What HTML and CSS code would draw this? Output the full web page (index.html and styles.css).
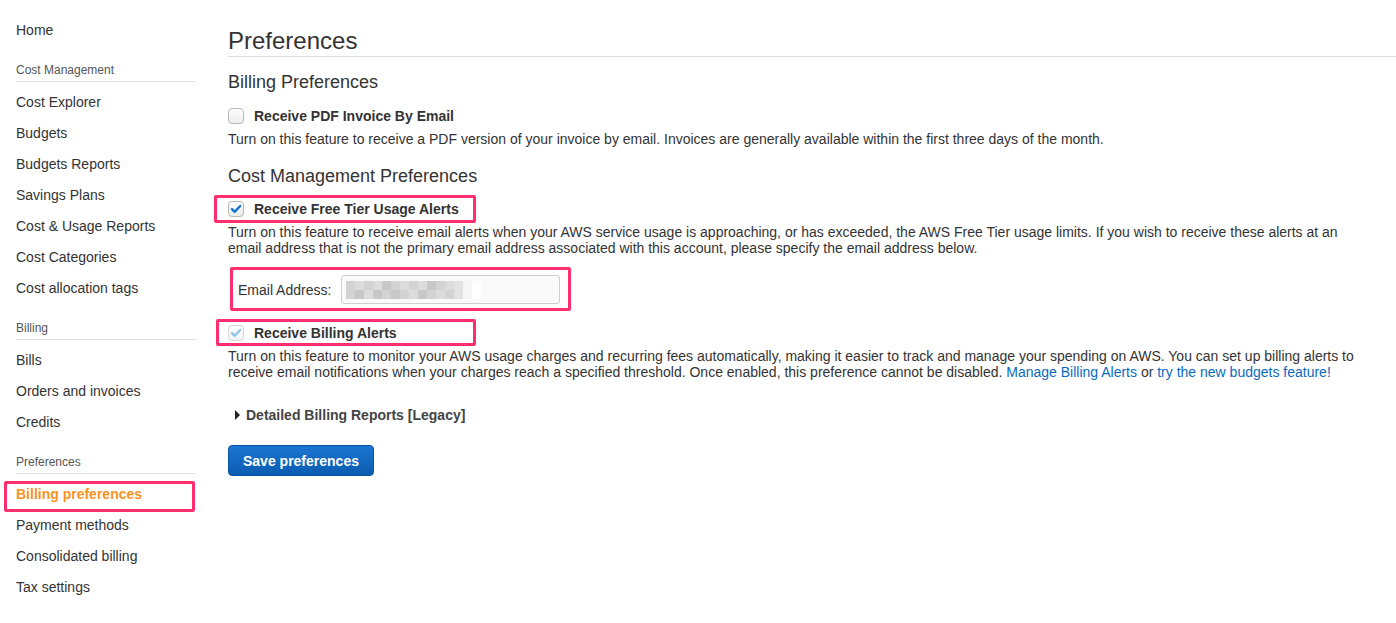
FILE: index.html
```html
<!DOCTYPE html>
<html lang="en">
<head>
<meta charset="utf-8">
<title>Billing preferences</title>
<link rel="stylesheet" href="styles.css">
</head>
<body>
<div class="page">
  <nav class="sidebar">
    <a class="nav-item" href="#">Home</a>
    <div class="nav-label">Cost Management</div>
    <a class="nav-item" href="#">Cost Explorer</a>
    <a class="nav-item" href="#">Budgets</a>
    <a class="nav-item" href="#">Budgets Reports</a>
    <a class="nav-item" href="#">Savings Plans</a>
    <a class="nav-item" href="#">Cost &amp; Usage Reports</a>
    <a class="nav-item" href="#">Cost Categories</a>
    <a class="nav-item" href="#">Cost allocation tags</a>
    <div class="nav-label">Billing</div>
    <a class="nav-item" href="#">Bills</a>
    <a class="nav-item" href="#">Orders and invoices</a>
    <a class="nav-item" href="#">Credits</a>
    <div class="nav-label">Preferences</div>
    <a class="nav-item active highlight-nav" href="#">Billing preferences</a>
    <a class="nav-item" href="#">Payment methods</a>
    <a class="nav-item" href="#">Consolidated billing</a>
    <a class="nav-item" href="#">Tax settings</a>
  </nav>

  <main class="main">
    <h1 class="page-title">Preferences</h1>
    <div class="content">
      <h2 class="section-title first">Billing Preferences</h2>
      <label class="check-row">
        <span class="checkbox"></span>
        <span class="check-label">Receive PDF Invoice By Email</span>
      </label>
      <p class="desc">Turn on this feature to receive a PDF version of your invoice by email. Invoices are generally available within the first three days of the month.</p>

      <h2 class="section-title">Cost Management Preferences</h2>
      <label class="check-row row-tier highlight-a">
        <span class="checkbox checked">
          <svg viewBox="0 0 16 16" width="16" height="16"><path d="M4 8.2l2.6 2.6L12.2 5" fill="none" stroke="#0b75d1" stroke-width="2.4" stroke-linecap="round" stroke-linejoin="round"/></svg>
        </span>
        <span class="check-label">Receive Free Tier Usage Alerts</span>
      </label>
      <p class="desc">Turn on this feature to receive email alerts when your AWS service usage is approaching, or has exceeded, the AWS Free Tier usage limits. If you wish to receive these alerts at an email address that is not the primary email address associated with this account, please specify the email address below.</p>

      <div class="email-row highlight-b">
        <span class="email-label">Email Address:</span>
        <div class="email-input">
          <div class="blur">
            <span class="px p2"></span><span class="px p1"></span><span class="px p2"></span><span class="px p1"></span><span class="px p3"></span><span class="px p2"></span><span class="px p1"></span><span class="px p2"></span><span class="px p1"></span><span class="px p3"></span><span class="px p2"></span><span class="px p1"></span><span class="px p4"></span><span class="px p5"></span><span class="px p6"></span>
            <span class="px p2"></span><span class="px p3"></span><span class="px p1"></span><span class="px p3"></span><span class="px p2"></span><span class="px p3"></span><span class="px p2"></span><span class="px p1"></span><span class="px p3"></span><span class="px p2"></span><span class="px p1"></span><span class="px p2"></span><span class="px p4"></span><span class="px p5"></span><span class="px p6"></span>
          </div>
        </div>
      </div>

      <label class="check-row row-billing highlight-c">
        <span class="checkbox checked disabled">
          <svg viewBox="0 0 16 16" width="16" height="16"><path d="M4 8.2l2.6 2.6L12.2 5" fill="none" stroke="#8ec6ea" stroke-width="2.4" stroke-linecap="round" stroke-linejoin="round"/></svg>
        </span>
        <span class="check-label">Receive Billing Alerts</span>
      </label>
      <p class="desc">Turn on this feature to monitor your AWS usage charges and recurring fees automatically, making it easier to track and manage your spending on AWS. You can set up billing alerts to receive email notifications when your charges reach a specified threshold. Once enabled, this preference cannot be disabled. <a href="#">Manage Billing Alerts</a> or <a href="#">try the new budgets feature!</a></p>

      <div class="expander">
        <span class="caret"></span>
        <span class="expander-label">Detailed Billing Reports [Legacy]</span>
      </div>

      <button class="btn-primary" type="button">Save preferences</button>
    </div>
  </main>
</div>
</body>
</html>
```

FILE: styles.css
```css
* { box-sizing: border-box; }

html, body {
  margin: 0;
  padding: 0;
  background: #fff;
}

body {
  font-family: "Liberation Sans", Arial, Helvetica, sans-serif;
  color: #333;
  font-size: 14px;
}

.page {
  display: flex;
  align-items: flex-start;
  gap: 32px;
}

/* Sidebar */
.sidebar {
  width: 196px;
  flex: 0 0 196px;
  padding: 15px 0 0 16px;
  display: flex;
  flex-direction: column;
}

.nav-item {
  display: block;
  height: 31px;
  line-height: 31px;
  font-size: 14px;
  color: #333;
  text-decoration: none;
  white-space: nowrap;
}

.nav-item.active {
  color: #f7931e;
  font-weight: bold;
}

.nav-label {
  margin-top: 16px;
  margin-bottom: 5px;
  line-height: 16px;
  padding-bottom: 3px;
  font-size: 12px;
  color: #555;
  border-bottom: 1px solid #e2e2e2;
}

.highlight-nav {
  position: relative;
}

.highlight-nav::after {
  content: "";
  position: absolute;
  left: -12px;
  right: 1px;
  top: 2px;
  bottom: -2px;
  border: 3px solid #ff2e6e;
  border-radius: 2px;
  pointer-events: none;
}

/* Main */
.main {
  flex: 1;
  min-width: 0;
  padding-top: 27px;
}

.page-title {
  margin: 0;
  font-size: 24px;
  font-weight: normal;
  line-height: 28px;
  padding-bottom: 1px;
  color: #333;
  border-bottom: 1px solid #dcdcdc;
}

.content {
  padding-right: 30px;
  display: flex;
  flex-direction: column;
  align-items: flex-start;
}

.section-title {
  margin: 18px 0 0;
  font-size: 18px;
  font-weight: normal;
  line-height: 22px;
  color: #333;
}

.section-title.first {
  margin-top: 14px;
}

.check-row {
  display: inline-flex;
  align-items: center;
  gap: 10px;
  height: 20px;
  margin-top: 13px;
  cursor: pointer;
}

.row-tier { margin-top: 12px; }
.row-billing { margin-top: 19px; }

.highlight-a,
.highlight-c {
  position: relative;
}

.highlight-a::after,
.highlight-c::after {
  content: "";
  position: absolute;
  left: -14px;
  right: -17px;
  top: -4px;
  bottom: -4px;
  border: 3px solid #ff2e6e;
  border-radius: 2px;
  pointer-events: none;
}

.highlight-c::after {
  left: -12px;
  right: -79px;
  bottom: -3px;
}

.checkbox {
  width: 16px;
  height: 16px;
  border: 1px solid #b8b8b8;
  border-radius: 4px;
  background: linear-gradient(#fdfdfd, #ececec);
  display: inline-flex;
  align-items: center;
  justify-content: center;
  flex: 0 0 16px;
}

.checkbox svg {
  display: block;
  margin: -1px;
}

.checkbox.disabled {
  border-color: #d6d6d6;
  background: linear-gradient(#fdfdfd, #f4f4f4);
}

.check-label {
  font-weight: bold;
  font-size: 14px;
  color: #333;
}

.desc {
  margin: 5px 0 0;
  font-size: 14px;
  line-height: 16px;
  color: #333;
}

.desc a {
  color: #0a6ac0;
  text-decoration: none;
}

/* Email */
.email-row {
  display: inline-flex;
  align-items: center;
  gap: 10px;
  margin-top: 19px;
  padding-left: 10px;
}

.highlight-b {
  position: relative;
}

.highlight-b::after {
  content: "";
  position: absolute;
  left: 2px;
  right: -11px;
  top: -8px;
  bottom: -7px;
  border: 3px solid #ff2e6e;
  border-radius: 2px;
  pointer-events: none;
}

.email-label {
  font-size: 14px;
  color: #333;
}

.email-input {
  width: 219px;
  height: 29px;
  border: 1px solid #cfcfcf;
  border-radius: 3px;
  background: #fafafa;
  padding: 5px 0 0 4px;
}

.blur {
  display: grid;
  grid-template-columns: repeat(15, 9px);
  grid-auto-rows: 9px;
}

.px { display: block; }
.p1 { background: #dcdcdc; }
.p2 { background: #d3d3d3; }
.p3 { background: #c8c8c8; }
.p4 { background: #e2e2e2; }
.p5 { background: #f6f6f6; }
.p6 { background: #ffffff; }

/* Expander */
.expander {
  display: flex;
  align-items: center;
  gap: 6px;
  margin-top: 25px;
  height: 20px;
  padding-left: 7px;
}

.caret {
  width: 0;
  height: 0;
  border-top: 5px solid transparent;
  border-bottom: 5px solid transparent;
  border-left: 5px solid #222;
}

.expander-label {
  font-weight: bold;
  font-size: 14px;
  color: #444;
}

/* Button */
.btn-primary {
  margin-top: 20px;
  height: 31px;
  padding: 1px 14px 0;
  border: 1px solid #0a55a3;
  border-radius: 4px;
  background: linear-gradient(#1b76d2, #0b5cb0);
  color: #fff;
  font-family: "Liberation Sans", Arial, Helvetica, sans-serif;
  font-weight: bold;
  font-size: 14px;
  cursor: pointer;
}
```
